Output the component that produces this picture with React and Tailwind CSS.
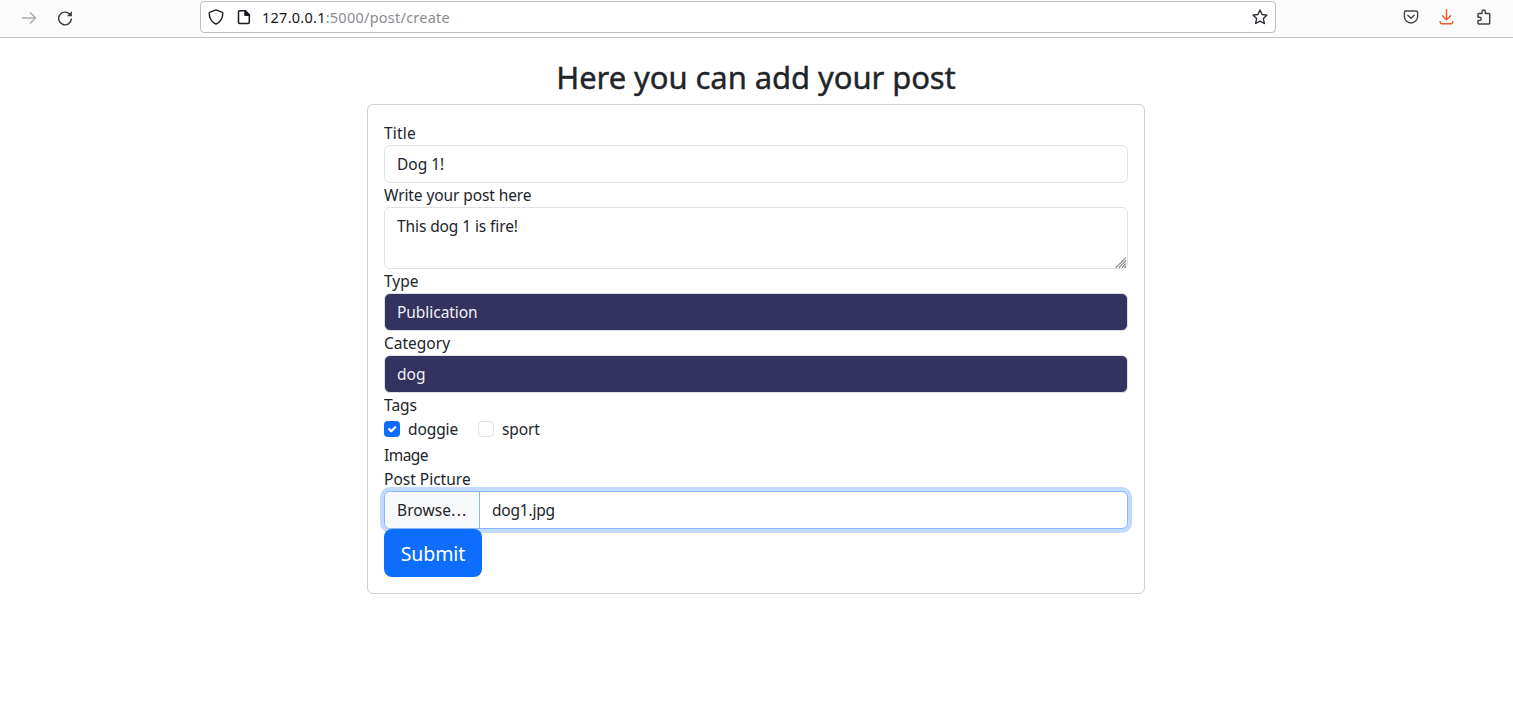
import React from "react";

const label = "block h-6 leading-6 text-[15.5px] whitespace-nowrap";
const field = "w-full rounded-md border border-[#dee2e6] px-3 text-[15.5px] leading-6";

function Toolbar() {
  return (
    <header className="flex h-[38px] items-start border-b border-[#c4c4c6] bg-[#fbfbfb] text-[#2b2a33]">
      <div className="flex h-[35px] w-[200px] shrink-0 items-center gap-5 pl-[21px]">
        <svg width="16" height="16" viewBox="0 0 16 16" fill="none" stroke="#acacaf" strokeWidth="1.3" strokeLinecap="round" strokeLinejoin="round">
          <path d="M1.5 8h13M9.3 2.7L14.6 8l-5.3 5.3" />
        </svg>
        <svg width="16" height="16" viewBox="0 0 16 16" fill="none" stroke="#38373f" strokeWidth="1.4" strokeLinecap="round">
          <path d="M14.4 9.2A6.4 6.4 0 1 1 12.6 4" />
          <path d="M14.9 1.3v5h-5z" fill="#38373f" stroke="none" />
        </svg>
      </div>
      <div className="mt-px flex h-8 w-[1076px] shrink-0 items-center rounded border border-[#c0c0c2] bg-white px-[7px]">
        <svg width="16" height="16" viewBox="0 0 16 16" fill="none" stroke="#1b1a22" strokeWidth="1.4" strokeLinejoin="round">
          <path d="M8 .9L13.9 3.1c.6.2.9.6.9 1.2-.1 4.8-2.3 8.8-6.8 10.9C3.5 13.1 1.3 9.1 1.2 4.3c0-.6.3-1 .9-1.2z" />
        </svg>
        <svg className="ml-3" width="16" height="16" viewBox="0 0 16 16" fill="none" stroke="#1b1a22" strokeWidth="1.5" strokeLinejoin="round">
          <path d="M3.7 1.7h5.6l4 4v7.6a1.2 1.2 0 0 1-1.2 1.2H3.7a1.2 1.2 0 0 1-1.2-1.2V2.9a1.2 1.2 0 0 1 1.2-1.2z" />
          <path d="M9 1.5v4.7h4.5z" fill="#1b1a22" />
        </svg>
        <span className="ml-[10px] whitespace-nowrap text-[14.5px] leading-5 tracking-[0.25px] text-[#8b8b90]">
          <span className="text-[#15141a]">127.0.0.1</span>:5000/post/create
        </span>
        <svg className="ml-auto" width="16" height="16" viewBox="0 0 16 16" fill="none" stroke="#2b2a33" strokeWidth="1.4" strokeLinejoin="round">
          <path d="M8 1l2.1 4.5 4.9.6-3.6 3.4.9 5L8 12.1l-4.300 2.400.9-5L1 6.100l4.900-.6z" />
        </svg>
      </div>
      <div className="ml-auto flex h-[34px] items-center pr-[21px]">
        <svg width="16" height="16" viewBox="0 0 16 16" fill="none" stroke="#45444c" strokeWidth="1.4" strokeLinecap="round" strokeLinejoin="round">
          <path d="M2.7 2h10.6a1.300 1.300 0 0 1 1.300 1.300v4.100a6.600 6.600 0 0 1-13.200 0V3.300A1.300 1.300 0 0 1 2.700 2z" />
          <path d="M4.800 6.300L8 9.300l3.200-3" />
        </svg>
        <svg className="ml-5" width="16" height="16" viewBox="0 0 16 16" fill="none" stroke="#f0572b" strokeWidth="1.4" strokeLinecap="round" strokeLinejoin="round">
          <path d="M7.5.8v9.8M3.4 6.7l4.1 4.1 4.1-4.1M1.200 12.400v.8a1.500 1.500 0 0 0 1.500 1.500h9.600a1.500 1.500 0 0 0 1.500-1.500v-.8" />
        </svg>
        <svg className="ml-[21px]" width="16" height="16" viewBox="0 0 16 16" fill="none" stroke="#45444c" strokeWidth="1.5" strokeLinejoin="round">
          <path d="M2 8.200V5.200a.7.7 0 0 1 .7-.7H6V2.700a1.700 1.700 0 0 1 3.400 0v1.800h3.600a.7.7 0 0 1 .7.7v9a.7.7 0 0 1-.7.7H2.700a.7.7 0 0 1-.7-.7v-2.700h1.600a1.650 1.650 0 0 0 0-3.300z" />
        </svg>
      </div>
    </header>
  );
}

export default function App() {
  return (
    <div className="min-h-screen bg-white font-['Noto_Sans',sans-serif] text-[#212529]">
      <Toolbar />
      <div className="pr-px">
        <main className="mx-auto w-[778px] pt-5">
          <h2 className="mb-2 h-[38px] whitespace-nowrap text-center text-[31px] font-normal leading-[38px] tracking-[-0.08px] [-webkit-text-stroke:0.4px_#212529]">
            Here you can add your post
          </h2>
          <form className="h-[490px] rounded-md border border-[#d0d1d2] p-4" onSubmit={(e) => e.preventDefault()}>
            <label className={`${label} tracking-[0.2px]`}>Title</label>
            <input defaultValue="Dog 1!" className={`${field} block h-[38px] outline-none`} />
            <label className={`${label} tracking-[-0.1px]`}>Write your post here</label>
            <div className="relative h-[62px]">
              <textarea
                defaultValue="This dog 1 is fire!"
                className={`${field} block h-[62px] resize-none overflow-hidden py-[6px] tracking-[-0.1px] outline-none`}
              />
              <svg className="absolute bottom-px right-px" width="12" height="12" viewBox="0 0 12 12" fill="none" stroke="#68686c" strokeWidth="1.1">
                <path d="M1 11.500L11 1.500M4 11.500L11 4.500M7 11.500L11 7.500M9.500 11.500L11 10" strokeDasharray="1.400 .3" />
              </svg>
            </div>
            <label className={label}>Type</label>
            <div className={`${field} h-[38px] bg-[#34325e] py-[6px] tracking-[-0.05px] text-[#f1f1f6]`}>Publication</div>
            <label className={label}>Category</label>
            <div className={`${field} h-[38px] bg-[#34325e] py-[6px] text-[#f1f1f6]`}>dog</div>
            <label className={label}>Tags</label>
            <div className="flex h-[26px] items-start">
              <span className="mt-1 flex size-4 items-center justify-center rounded-[4px] bg-[#0d6efd]">
                <svg width="16" height="16" viewBox="0 0 16 16" fill="none" stroke="#fff" strokeWidth="2.3" strokeLinecap="round" strokeLinejoin="round">
                  <path d="M5.200 8.200l2 2 4-4" />
                </svg>
              </span>
              <span className={`${label} ml-2 w-[70px] tracking-[-0.1px]`}>doggie</span>
              <span className="mt-1 size-4 rounded-[4px] border border-[#dee2e6] bg-white" />
              <span className={`${label} ml-2 tracking-[-0.1px]`}>sport</span>
            </div>
            <label className={`${label} tracking-[-0.55px]`}>Image</label>
            <label className={label}>Post Picture</label>
            <div className="flex h-[38px] rounded-md border border-[#86b7fe] bg-white text-[15.5px] leading-9 shadow-[0_0_0_4px_rgba(13,110,253,0.25)]">
              <span className="w-[95px] whitespace-nowrap rounded-l-[5px] border-r border-[#86b7fe] bg-[#f8f9fa] pl-3 tracking-[0.1px]">
                Browse<span className="tracking-[1.3px]">...</span>
              </span>
              <span className="pl-3 tracking-[-0.2px]">dog1.jpg</span>
            </div>
            <button type="submit" className="relative block h-12 w-[98px] rounded-lg bg-[#0d6efd] pt-px text-center text-[19.5px] leading-[48px] tracking-[-0.1px] text-white">
              Submit
            </button>
          </form>
        </main>
      </div>
    </div>
  );
}
